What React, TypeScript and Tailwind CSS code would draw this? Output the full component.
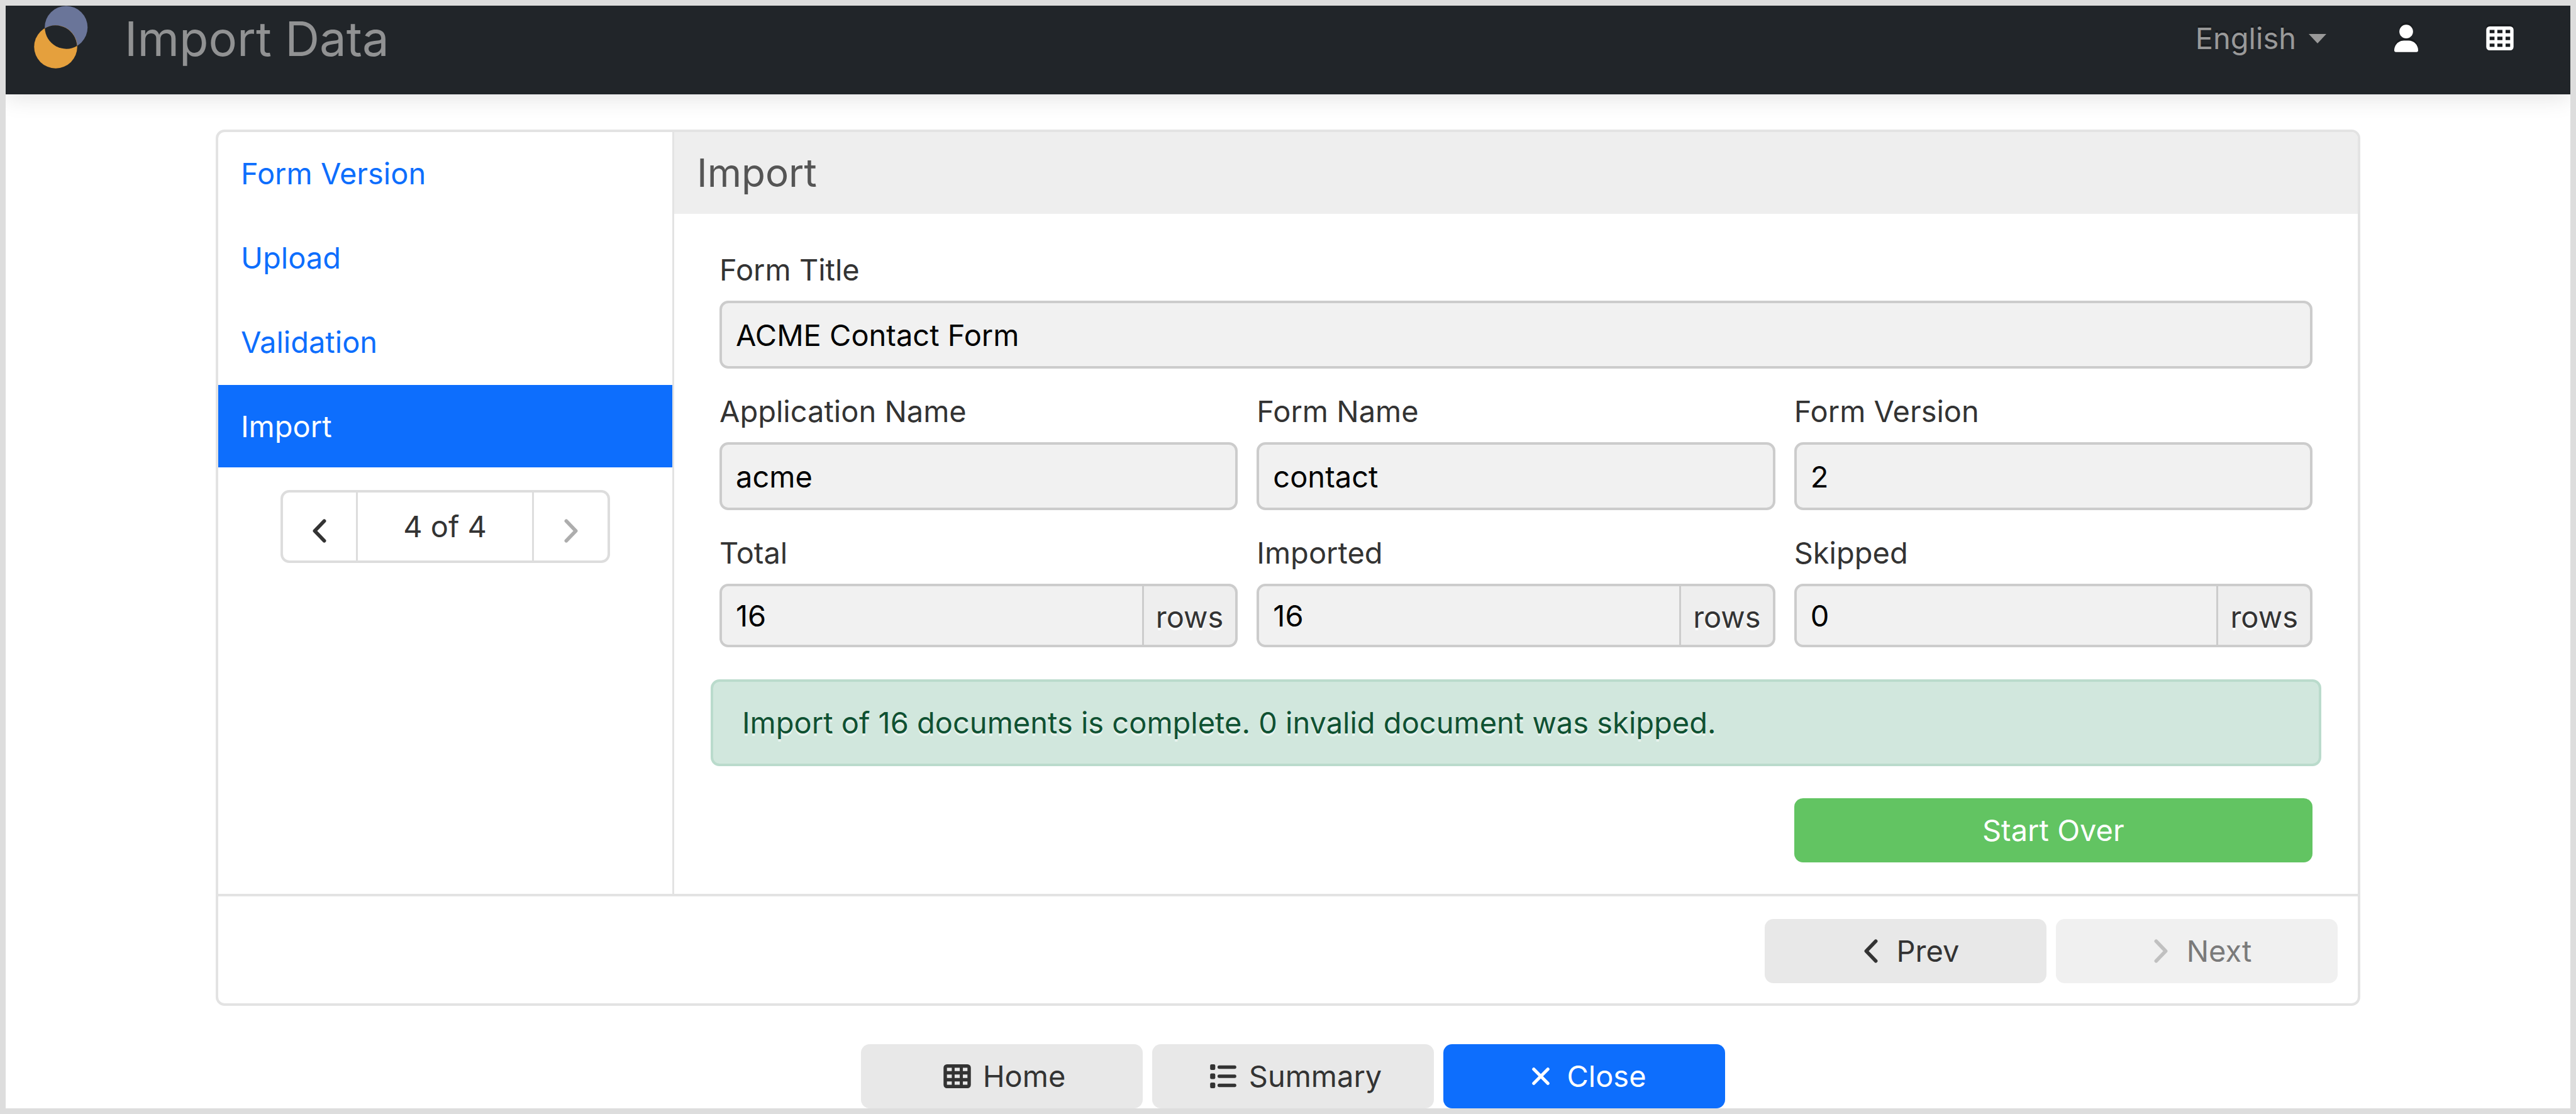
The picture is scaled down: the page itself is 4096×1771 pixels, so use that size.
import React from "react";

const navItems = ["Form Version", "Upload", "Validation", "Import"];

function Chevron({ dir, className }: { dir: "left" | "right"; className: string }) {
  return (
    <svg viewBox="0 0 24 40" className={className} fill="none" stroke="currentColor" strokeWidth="6" strokeLinecap="round" strokeLinejoin="round" aria-hidden="true">
      <path d={dir === "left" ? "M20 3.5 4 20l16 16.500" : "M4 3.5 20 20 4 36.500"} />
    </svg>
  );
}

function TableIcon({ className }: { className: string }) {
  return (
    <svg viewBox="0 0 48 42" className={className} fill="currentColor" fillRule="evenodd" aria-hidden="true">
      <path d="M6 0h36a6 6 0 0 1 6 6v30a6 6 0 0 1-6 6H6a6 6 0 0 1-6-6V6a6 6 0 0 1 6-6zM6 6v6h8.500V6zM19.500 6v6h9V6zM34 6v6h8V6zM6 18v6h8.500v-6zM19.500 18v6h9v-6zM34 18v6h8v-6zM6 30v6h8.500v-6zM19.500 30v6h9v-6zM34 30v6h8v-6z" />
    </svg>
  );
}

function ListIcon({ className }: { className: string }) {
  return (
    <svg viewBox="0 0 46 42" className={className} fill="currentColor" aria-hidden="true">
      <rect x="0" y="0" width="9" height="10" rx="2.500" />
      <rect x="0" y="16" width="9" height="10" rx="2.500" />
      <rect x="0" y="32" width="9" height="10" rx="2.500" />
      <rect x="13" y="2" width="33" height="6" rx="3" />
      <rect x="13" y="18" width="33" height="6" rx="3" />
      <rect x="13" y="34" width="33" height="6" rx="3" />
    </svg>
  );
}

function IconBox({ children }: { children: React.ReactNode }) {
  return <span className="flex w-[60px] items-center justify-center">{children}</span>;
}

function Field({ id, label, value, suffix }: { id: string; label: string; value: string; suffix?: string }) {
  return (
    <div className="flex flex-col gap-[13px]">
      <label htmlFor={id} className="leading-[72px] text-[#333333]">{label}</label>
      {suffix ? (
        <div className="flex h-[101px] overflow-hidden rounded-[14px] border-4 border-[#cccccc] bg-[#eeeeee]">
          <input id={id} readOnly value={value} className="min-w-0 flex-1 bg-[#f1f1f1] px-[22px] text-black outline-none" />
          <span className="flex items-center border-l-[3px] border-[#cccccc] px-[19px] pt-[4px] text-[#333333] [text-shadow:0_4px_0_#ffffff]">{suffix}</span>
        </div>
      ) : (
        <input id={id} readOnly value={value} className="h-[108px] w-full rounded-[14px] border-4 border-[#cccccc] bg-[#f1f1f1] px-[22px] text-black outline-none" />
      )}
    </div>
  );
}

export default function App() {
  return (
    <div className="min-h-screen overflow-clip border-[9px] border-[#dddddd] bg-white font-['Inter',sans-serif] text-[47px] leading-[72px] text-[#333333]">
      <header className="flex h-[141px] items-start bg-[#212529] pr-[90px] pl-[45px] shadow-[0_4px_36px_rgba(0,0,0,0.12)]">
        <svg viewBox="0 0 94 110" className="h-[100px] w-[86px]" role="img" aria-label="Logo">
          <circle cx="56" cy="38" r="37.500" fill="#6a7599" />
          <circle cx="37.700" cy="72" r="37.700" fill="#e5a03d" />
          <path d="M18.700 39.500A37.600 37.600 0 0 1 75 70.500 37.600 37.600 0 0 1 18.700 39.500z" fill="#212529" />
        </svg>
        <h1 className="ml-[58px] text-[76px] leading-[104px] font-normal text-[#919293]">Import Data</h1>
        <div className="ml-auto flex h-[104px] items-center">
          <button className="flex items-center gap-[20px] text-[#999999] [text-shadow:0_-4px_0_rgba(0,0,0,0.25)]">
            English
            <svg viewBox="0 0 30 16" className="h-[15px] w-[28px]" fill="currentColor" aria-hidden="true"><path d="M0 0h30L15 16z" /></svg>
          </button>
          <button aria-label="User" className="ml-[108px] text-white drop-shadow-[0_-4px_0_rgba(0,0,0,0.25)]">
            <svg viewBox="0 0 42 48" className="h-[44px] w-[38px]" fill="currentColor" aria-hidden="true">
              <circle cx="21" cy="12" r="12" />
              <path d="M17 28h8c9.400 0 17 7.600 17 17 0 2-1 3-3 3H3c-2 0-3-1-3-3 0-9.400 7.600-17 17-17z" />
            </svg>
          </button>
          <button aria-label="Applications" className="ml-[108px] text-white drop-shadow-[0_-4px_0_rgba(0,0,0,0.25)]"><TableIcon className="h-[38px] w-[44px]" /></button>
        </div>
      </header>

      <main className="mx-[334px] mt-[56px]">
        <section className="overflow-hidden rounded-[14px] border-4 border-[#e3e3e3]">
          <div className="flex">
            <nav className="flex w-[725px] shrink-0 flex-col gap-[3px] border-r-[3px] border-[#e3e3e3]">
              {navItems.map((n) => (
                <a key={n} href="#" className={n === "Import" ? "bg-[#0d6efd] px-[36px] leading-[131px] text-white" : "px-[36px] leading-[131px] text-[#0d6efd]"}>{n}</a>
              ))}
              <div className="mx-auto mt-[33px] flex h-[116px] rounded-[14px] border-4 border-[#dddddd]">
                <button aria-label="Previous page" className="flex w-[116px] items-center justify-center pt-[14px]"><Chevron dir="left" className="h-[38px] w-[24px]" /></button>
                <span className="flex w-[283px] items-center justify-center border-x-[3px] border-[#dddddd]">4 of 4</span>
                <button aria-label="Next page" disabled className="flex w-[117px] items-center justify-center pt-[14px] text-[#adadad]"><Chevron dir="right" className="h-[38px] w-[24px]" /></button>
              </div>
            </nav>
            <div className="min-w-0 flex-1">
              <h2 className="bg-[#eeeeee] px-[36px] text-[62px] leading-[130px] text-[#555555]">Import</h2>
              <div className="px-[72px] pt-[53px] pb-[50px]">
                <div className="flex flex-col gap-[32px]">
                  <Field id="title" label="Form Title" value="ACME Contact Form" />
                  <div className="grid grid-cols-3 gap-[30px]">
                    <Field id="app" label="Application Name" value="acme" />
                    <Field id="form" label="Form Name" value="contact" />
                    <Field id="version" label="Form Version" value="2" />
                  </div>
                  <div className="grid grid-cols-3 gap-[30px]">
                    <Field id="total" label="Total" value="16" suffix="rows" />
                    <Field id="imported" label="Imported" value="16" suffix="rows" />
                    <Field id="skipped" label="Skipped" value="0" suffix="rows" />
                  </div>
                </div>
                <div role="alert" className="-mx-[14px] mt-[51px] rounded-[14px] border-4 border-[#badbcc] bg-[#d1e7dd] px-[46px] py-[29px] text-[#0f5132] [text-shadow:0_4px_0_rgba(255,255,255,0.5)]">
                  Import of 16 documents is complete. 0 invalid document was skipped.
                </div>
                <div className="mt-[51px] grid grid-cols-3 gap-[30px]">
                  <button className="col-start-3 h-[102px] rounded-[14px] bg-[#62c462] text-white">Start Over</button>
                </div>
              </div>
            </div>
          </div>
          <footer className="flex justify-end gap-[15px] border-t-4 border-[#e3e3e3] px-[32px] pt-[36px] pb-[32px]">
            <button className="flex h-[102px] w-[448px] items-center justify-center gap-[11px] rounded-[14px] bg-[#e8e8e8]"><IconBox><Chevron dir="left" className="h-[38px] w-[24px]" /></IconBox>Prev</button>
            <button disabled className="flex h-[102px] w-[448px] items-center justify-center gap-[11px] rounded-[14px] bg-[#f0f0f0] text-[#7a7a7a]"><IconBox><Chevron dir="right" className="h-[38px] w-[24px] text-[#c0c0c0]" /></IconBox>Next</button>
          </footer>
        </section>
      </main>

      <div className="mt-[61px] flex justify-center gap-[15px] pl-[16px]">
        <button className="flex h-[102px] w-[448px] items-center justify-center gap-[11px] rounded-[14px] bg-[#e8e8e8]"><IconBox><TableIcon className="h-[38px] w-[44px]" /></IconBox>Home</button>
        <button className="flex h-[102px] w-[448px] items-center justify-center gap-[11px] rounded-[14px] bg-[#e8e8e8]"><IconBox><ListIcon className="h-[38px] w-[42px]" /></IconBox>Summary</button>
        <button className="flex h-[102px] w-[448px] items-center justify-center gap-[11px] rounded-[14px] bg-[#0d6efd] text-white">
          <IconBox><svg viewBox="0 0 30 30" className="h-[28px] w-[28px]" fill="none" stroke="currentColor" strokeWidth="5.500" strokeLinecap="round" aria-hidden="true"><path d="M3 3l24 24M27 3 3 27" /></svg></IconBox>
          Close
        </button>
      </div>
    </div>
  );
}
